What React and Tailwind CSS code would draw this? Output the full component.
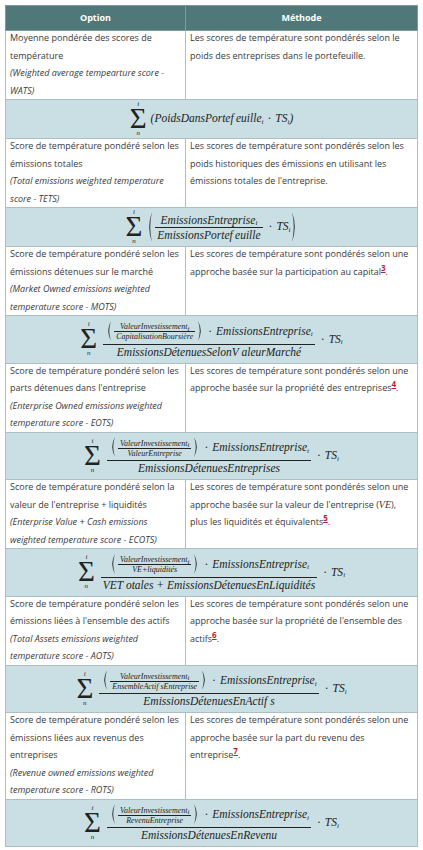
import React from "react";

const serif = "font-['Liberation_Serif',serif] italic";

const Paren = ({ right, h = 26 }) => (
  <svg width="7" height={h} viewBox={`0 0 7 ${h}`} className="shrink-0">
    {right ? (
      <path d={`M1 0 Q6.5 ${h / 2} 1 ${h} Q4.6 ${h / 2} 1 0 Z`} fill="#222" />
    ) : (
      <path d={`M6 0 Q0.5 ${h / 2} 6 ${h} Q2.4 ${h / 2} 6 0 Z`} fill="#222" />
    )}
  </svg>
);

const Sum = () => (
  <span className="inline-flex flex-col items-center mr-[4px] leading-none text-[#222]">
    <span className="text-[7px] leading-[7px]">i</span>
    <span className="text-[29px] leading-[21px] not-italic">Σ</span>
    <span className="text-[7px] leading-[8px]">n</span>
  </span>
);

const Frac = ({ num, den, small }) => (
  <span className="inline-flex flex-col items-center mx-[2px]">
    <span className={small ? "px-[2px] leading-[9px]" : "px-[2px] leading-[14px]"}>{num}</span>
    <span className="w-full h-px bg-[#222]" />
    <span className={small ? "px-[2px] leading-[9px]" : "px-[2px] leading-[14px]"}>{den}</span>
  </span>
);

const Dot = () => <span className="mx-[4px] not-italic">·</span>;

const Sub = ({ children }) => <sub className="text-[7px]">{children}</sub>;

// numerator of the holding based formulas
const Holding = ({ den }) => (
  <span className="inline-flex items-center">
    <Paren h={20} />
    <span className="text-[8px]">
      <Frac small num={<span>ValeurInvestissement<Sub>i</Sub></span>} den={den} />
    </span>
    <Paren right h={20} />
    <Dot />
    <span>
      EmissionsEntreprise<Sub>i</Sub>
    </span>
  </span>
);

const HoldingFormula = ({ small, den }) => (
  <>
    <Sum />
    <Frac num={<Holding den={small} />} den={den} />
    <Dot />
    <span>
      TS<Sub>i</Sub>
    </span>
  </>
);

const formulas = [
  <>
    <Sum />
    <span>
      (PoidsDansPortef&thinsp;euille<Sub>i</Sub>
      <Dot />
      TS<Sub>i</Sub>)
    </span>
  </>,
  <>
    <Sum />
    <Paren h={30} />
    <Frac
      num={<span>EmissionsEntreprise<Sub>i</Sub></span>}
      den={<span>EmissionsPortef&thinsp;euille</span>}
    />
    <Dot />
    <span>
      TS<Sub>i</Sub>
    </span>
    <Paren right h={30} />
  </>,
  <HoldingFormula small="CapitalisationBoursière" den="EmissionsDétenuesSelonV aleurMarché" />,
  <HoldingFormula small="ValeurEntreprise" den="EmissionsDétenuesEntreprises" />,
  <HoldingFormula small="VE+liquidités" den="VET otales + EmissionsDétenuesEnLiquidités" />,
  <HoldingFormula small="EnsembleActif sEntreprise" den="EmissionsDétenuesEnActif s" />,
  <HoldingFormula small="RevenuEntreprise" den="EmissionsDétenuesEnRevenu" />,
];

const Note = ({ n }) => (
  <sup className="text-[#c41a2f] font-bold underline text-[8px]">{n}</sup>
);

const rows = [
  {
    label: "Moyenne pondérée des scores de température",
    en: "(Weighted average tempearture score - WATS)",
    method: <>Les scores de température sont pondérés selon le poids des entreprises dans le portefeuille.</>,
  },
  {
    label: "Score de température pondéré selon les émissions totales",
    en: "(Total emissions weighted temperature score - TETS)",
    method: <>Les scores de température sont pondérés selon les poids historiques des émissions en utilisant les émissions totales de l'entreprise.</>,
  },
  {
    label: "Score de température pondéré selon les émissions détenues sur le marché",
    en: "(Market Owned emissions weighted temperature score - MOTS)",
    method: <>Les scores de température sont pondérés selon une approche basée sur la participation au capital<Note n="3" />.</>,
  },
  {
    label: "Score de température pondéré selon les parts détenues dans l'entreprise",
    en: "(Enterprise Owned emissions weighted temperature score - EOTS)",
    method: <>Les scores de température sont pondérés selon une approche basée sur la propriété des entreprises<Note n="4" />.</>,
  },
  {
    label: "Score de température pondéré selon la valeur de l'entreprise + liquidités",
    en: "(Enterprise Value + Cash emissions weighted temperature score - ECOTS)",
    method: (
      <>
        Les scores de température sont pondérés selon une approche basée sur la valeur de l'entreprise (
        <span className={`${serif} text-[10px]`}>VE</span>), plus les liquidités et équivalents<Note n="5" />.
      </>
    ),
  },
  {
    label: "Score de température pondéré selon les émissions liées à l'ensemble des actifs",
    en: "(Total Assets emissions weighted temperature score - AOTS)",
    method: <>Les scores de température sont pondérés selon une approche basée sur la propriété de l'ensemble des actifs<Note n="6" />.</>,
  },
  {
    label: "Score de température pondéré selon les émissions liées aux revenus des entreprises",
    en: "(Revenue owned emissions weighted temperature score - ROTS)",
    method: <>Les scores de température sont pondérés selon une approche basée sur la part du revenu des entreprise<Note n="7" />.</>,
  },
];

export default function App() {
  return (
    <div className="min-h-[850px] bg-white px-[5px] pt-[5px] font-['Open_Sans',sans-serif] text-[9px] text-[#3a3a3a]">
      <table className="w-full border-collapse table-fixed">
        <colgroup>
          <col className="w-[180px]" />
          <col />
        </colgroup>
        <thead>
          <tr className="bg-[#507878] text-white font-bold">
            <th className="h-[25px] border border-[#7f9c9c] text-center">Option</th>
            <th className="h-[25px] border border-[#7f9c9c] text-center">Méthode</th>
          </tr>
        </thead>
        <tbody>
          {rows.map((r, i) => (
            <React.Fragment key={i}>
              <tr className="align-top leading-[17.5px]">
                <td className="border border-[#aebfc2] px-[4px] py-0">
                  <div className="-mt-[2px]">
                    <div>{r.label}</div>
                    <div className="italic">{r.en}</div>
                  </div>
                </td>
                <td className="border border-[#aebfc2] px-[4px] py-0">
                  <div className="-mt-[2px]">{r.method}</div>
                </td>
              </tr>
              <tr>
                <td
                  colSpan={2}
                  className={`border border-[#aebfc2] bg-[#c9dfe3] ${i < 2 ? "py-[1px]" : "py-[4px]"}`}
                >
                  <div className={`flex items-center justify-center text-[11.5px] text-[#222] ${serif}`}>
                    {formulas[i]}
                  </div>
                </td>
              </tr>
            </React.Fragment>
          ))}
        </tbody>
      </table>
    </div>
  );
}
